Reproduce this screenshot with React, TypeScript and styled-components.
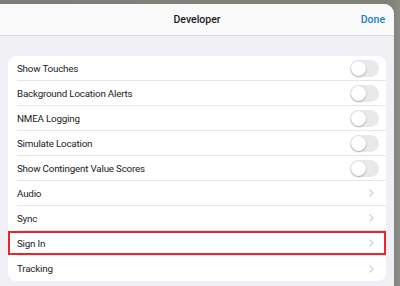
import React from "react";
import styled, { createGlobalStyle } from "styled-components";

type Setting = {
  label: string;
  kind: "toggle" | "link";
  highlighted?: boolean;
};

const settings: Setting[] = [
  { label: "Show Touches", kind: "toggle" },
  { label: "Background Location Alerts", kind: "toggle" },
  { label: "NMEA Logging", kind: "toggle" },
  { label: "Simulate Location", kind: "toggle" },
  { label: "Show Contingent Value Scores", kind: "toggle" },
  { label: "Audio", kind: "link" },
  { label: "Sync", kind: "link" },
  { label: "Sign In", kind: "link", highlighted: true },
  { label: "Tracking", kind: "link" },
];

const GlobalStyle = createGlobalStyle`
  html, body {
    margin: 0;
    padding: 0;
    overflow: hidden;
  }
  body {
    font-family: Roboto, "Liberation Sans", Arial, sans-serif;
    -webkit-font-smoothing: antialiased;
  }
`;

const App: React.FC = () => {
  return (
    <>
      <GlobalStyle />
      <Backdrop>
        <Sheet>
          <Header>
            <HeaderTitle>Developer</HeaderTitle>
            <DoneButton>Done</DoneButton>
          </Header>
          <Content>
            <Card>
              {settings.map((s, i) => (
                <Row key={i} highlighted={s.highlighted}>
                  <RowInner last={i === settings.length - 1}>
                    <Label>{s.label}</Label>
                    {s.kind === "toggle" ? (
                      <Toggle>
                        <Knob />
                      </Toggle>
                    ) : (
                      <Chevron viewBox="0 0 6 10">
                        <path
                          d="M1 1l4 4-4 4"
                          fill="none"
                          stroke="#c4c4c8"
                          strokeWidth="1.3"
                          strokeLinecap="round"
                          strokeLinejoin="round"
                        />
                      </Chevron>
                    )}
                  </RowInner>
                </Row>
              ))}
            </Card>
          </Content>
        </Sheet>
      </Backdrop>
    </>
  );
};

const Backdrop = styled.div`
  width: 400px;
  height: 286px;
  box-sizing: border-box;
  padding: 4px 6px 0 0;
  background: linear-gradient(90deg, #7c7f77 0%, #7f8279 98%, #8b8e87 100%);
  display: flex;
`;

const Sheet = styled.div`
  flex: 1;
  background: #efeff4;
  border-radius: 0 10px 0 0;
  overflow: hidden;
  display: flex;
  flex-direction: column;
`;

const Header = styled.div`
  height: 31px;
  flex: none;
  background: #f9f9f9;
  border-bottom: 1px solid #d9d9dc;
  position: relative;
  display: flex;
  align-items: center;
  justify-content: center;
`;

const HeaderTitle = styled.div`
  font-size: 10.5px;
  font-weight: 500;
  color: #1c1c1e;
`;

const DoneButton = styled.div`
  position: absolute;
  right: 9px;
  top: 0;
  bottom: 0;
  display: flex;
  align-items: center;
  font-size: 10.5px;
  font-weight: 500;
  color: #1a7dd6;
`;

const Content = styled.div`
  padding: 20px 8px 0 8px;
`;

const Card = styled.div`
  background: #ffffff;
  border-radius: 8px;
  overflow: hidden;
`;

const Row = styled.div<{ highlighted?: boolean }>`
  height: 25px;
  padding-left: 9px;
  position: relative;
  ${({ highlighted }) =>
    highlighted
      ? `&::after {
          content: "";
          position: absolute;
          left: 0;
          right: 0;
          top: 0;
          bottom: 1px;
          border: 2px solid #e8262c;
          pointer-events: none;
        }`
      : ""}
`;

const RowInner = styled.div<{ last?: boolean }>`
  height: 100%;
  box-sizing: border-box;
  display: flex;
  align-items: center;
  justify-content: space-between;
  padding-right: 7px;
  border-bottom: ${({ last }) => (last ? "none" : "1px solid #e6e6ea")};
`;

const Label = styled.span`
  font-size: 9.8px;
  letter-spacing: -0.2px;
  color: #222224;
`;

const Toggle = styled.div`
  width: 29px;
  height: 17px;
  border-radius: 9px;
  background: #e9e9eb;
  position: relative;
`;

const Knob = styled.div`
  position: absolute;
  left: 1px;
  top: 1px;
  width: 15px;
  height: 15px;
  border-radius: 50%;
  background: #ffffff;
  box-shadow: 0 1px 2px rgba(0, 0, 0, 0.25), 0 0 0 0.5px rgba(0, 0, 0, 0.06);
`;

const Chevron = styled.svg`
  width: 5px;
  height: 8px;
  margin-right: 5px;
`;

export default App;
